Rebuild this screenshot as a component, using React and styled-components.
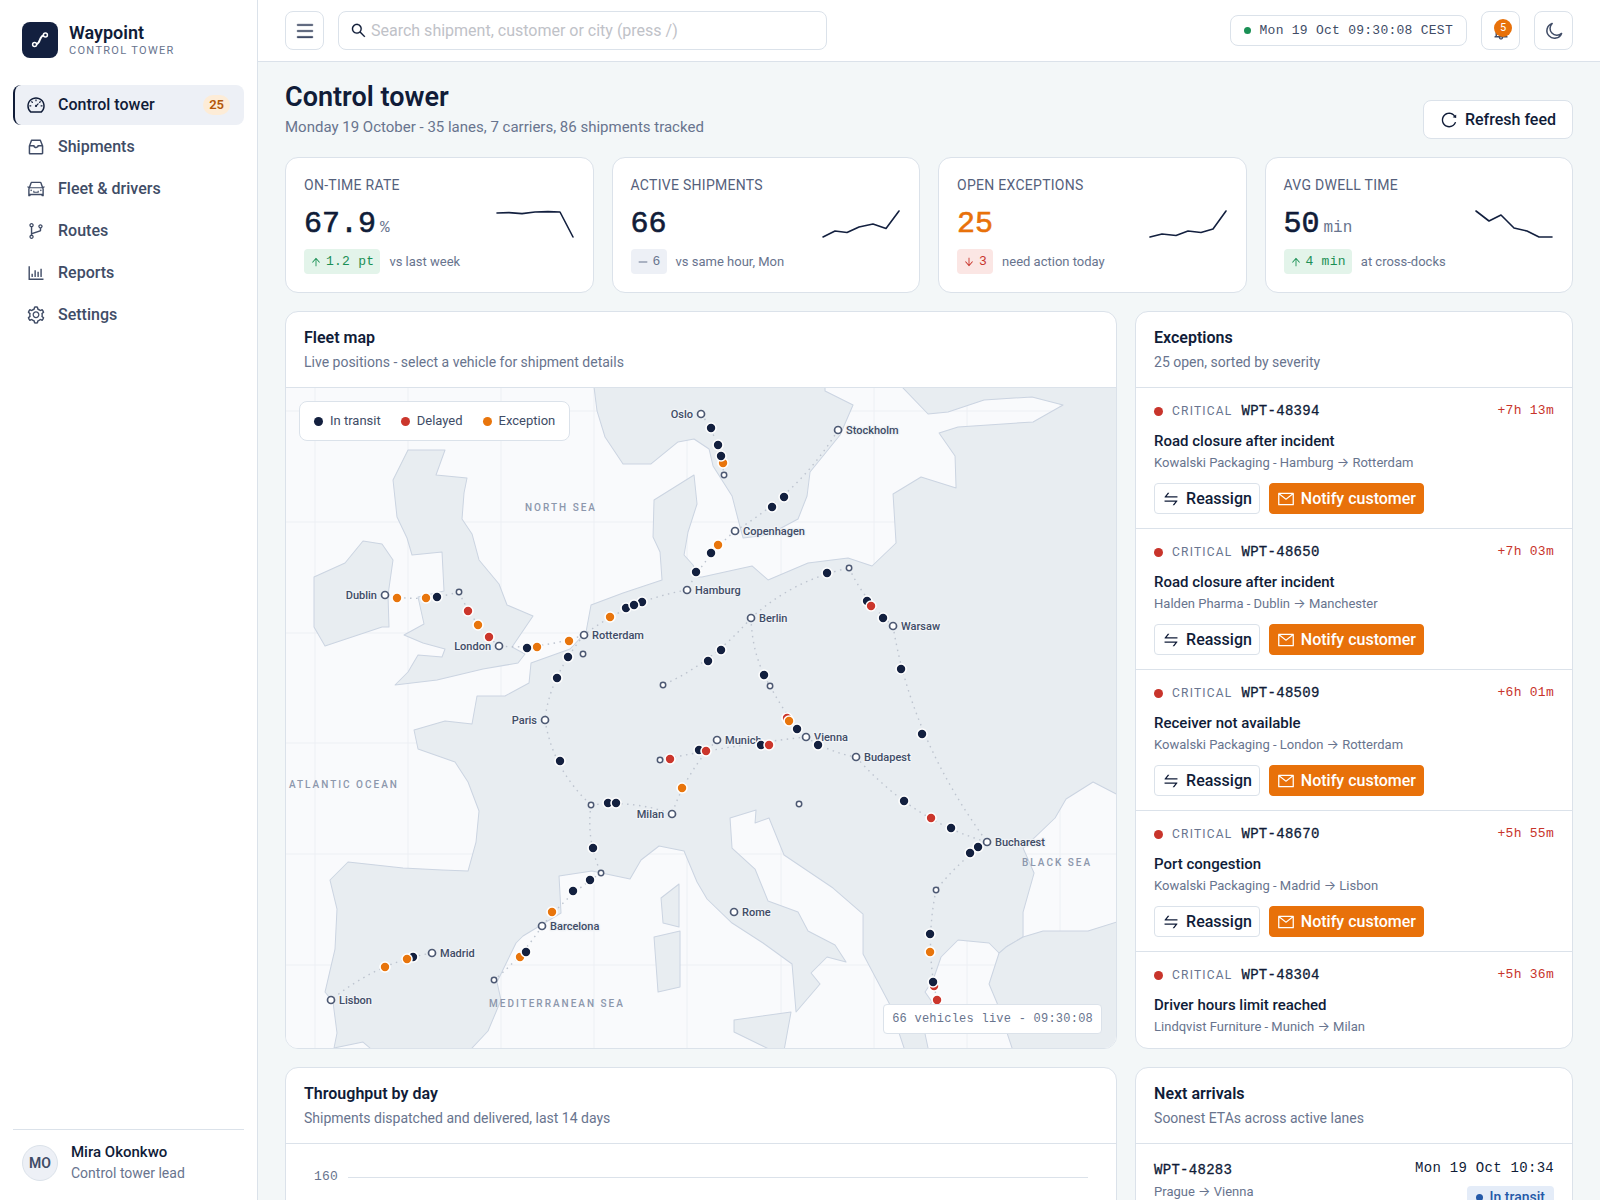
import React from "react";
import styled, { createGlobalStyle, css } from "styled-components";
import {
  AiOutlineDashboard,
  AiOutlineInbox,
  AiOutlineCar,
  AiOutlineBranches,
  AiOutlineBarChart,
  AiOutlineSetting,
  AiOutlineMenu,
  AiOutlineSearch,
  AiOutlineBell,
  AiOutlineReload,
  AiOutlineSwap,
  AiOutlineMail,
  AiOutlineArrowUp,
  AiOutlineArrowDown,
  AiOutlineMinus,
} from "react-icons/ai";

const c = {
  ink: "#101c38",
  text: "#404c66",
  muted: "#68748e",
  line: "#dbe2ea",
  page: "#f3f7f8",
  soft: "#edf0f6",
  orange: "#e8710a",
  red: "#c8342b",
  green: "#1a9055",
};
const sans = `Roboto, Inter, "Liberation Sans", sans-serif`;
const mono = `"Liberation Mono", monospace`;

const Global = createGlobalStyle`
  *, *::before, *::after { box-sizing: border-box; }
  html { overflow: hidden; }
  body { margin: 0; background: ${c.page}; color: ${c.ink}; font: 400 14px/20px ${sans}; }
  h1, h2, h3, p, ul { margin: 0; padding: 0; }
  ul { list-style: none; }
  button, input { font-family: inherit; }
  svg { display: block; flex: none; }
`;

const Shell = styled.div`
  display: grid;
  grid-template-columns: 258px minmax(0, 1fr);
  height: 100vh;
`;

/* Sidebar */
const Sidebar = styled.aside`
  display: flex;
  flex-direction: column;
  padding: 22px 13px 17px;
  background: #fff;
  border-right: 1px solid ${c.line};
`;
const Brand = styled.div`
  display: flex;
  align-items: center;
  gap: 11px;
  padding: 0 9px;
  margin-bottom: 27px;
`;
const Mark = styled.span`
  display: grid;
  place-items: center;
  width: 36px;
  height: 36px;
  border-radius: 8px;
  background: #13203f;
`;
const BrandName = styled.div`
  font-size: 18px;
  line-height: 22px;
  font-weight: 600;
`;
const BrandSub = styled.div`
  font-size: 11px;
  line-height: 14px;
  letter-spacing: 0.12em;
  text-transform: uppercase;
  color: ${c.muted};
`;
const Nav = styled.nav`
  display: flex;
  flex-direction: column;
  gap: 2px;
  flex: 1;
`;
const NavLink = styled.a`
  display: flex;
  align-items: center;
  gap: 12px;
  height: 40px;
  padding: 0 14px 0 11px;
  border-left: 2px solid transparent;
  border-radius: 8px;
  font-size: 16px;
  font-weight: 500;
  color: ${c.text};
  text-decoration: none;
  ${(p) =>
    p.$active &&
    css`
      color: ${c.ink};
      background: ${c.soft};
      border-left-color: ${c.ink};
    `}
`;
const NavCount = styled.span`
  margin-left: auto;
  padding: 0 6px;
  border-radius: 10px;
  background: #fdecd7;
  color: #b4560a;
  font-size: 13px;
  line-height: 20px;
  font-weight: 600;
`;
const Profile = styled.div`
  display: flex;
  align-items: center;
  gap: 13px;
  padding: 12px 9px 0;
  border-top: 1px solid ${c.line};
`;
const Avatar = styled.span`
  display: grid;
  place-items: center;
  width: 36px;
  height: 36px;
  border: 1px solid ${c.line};
  border-radius: 50%;
  background: ${c.soft};
  color: ${c.text};
  font-weight: 600;
`;
const ProfileName = styled.div`
  font-size: 15px;
  line-height: 21px;
  font-weight: 500;
`;
const ProfileRole = styled.div`
  line-height: 20px;
  color: ${c.muted};
`;

/* Top bar */
const Main = styled.main`
  display: flex;
  flex-direction: column;
  min-width: 0;
  overflow: hidden;
`;
const TopBar = styled.header`
  display: flex;
  flex: none;
  align-items: center;
  gap: 14px;
  padding: 11px 27px;
  background: #fff;
  border-bottom: 1px solid ${c.line};
`;
const IconButton = styled.button`
  display: grid;
  place-items: center;
  position: relative;
  width: 39px;
  height: 39px;
  padding: 0;
  border: 1px solid ${c.line};
  border-radius: 8px;
  background: #fff;
  color: ${c.text};
`;
const Search = styled.label`
  display: flex;
  align-items: center;
  gap: 4px;
  width: 489px;
  height: 39px;
  padding: 0 11px;
  border: 1px solid ${c.line};
  border-radius: 8px;
  color: ${c.ink};
`;
const SearchInput = styled.input`
  flex: 1;
  min-width: 0;
  padding: 0;
  border: 0;
  outline: 0;
  background: transparent;
  font-size: 16px;
  line-height: 24px;
  &::placeholder {
    color: #bfc2c8;
    opacity: 1;
  }
`;
const Clock = styled.div`
  display: flex;
  align-items: center;
  gap: 9px;
  height: 31px;
  margin-left: auto;
  padding: 0 13px;
  border: 1px solid ${c.line};
  border-radius: 8px;
  font: 400 13px/20px ${mono};
  letter-spacing: 0.02em;
  white-space: nowrap;
  color: ${c.text};
`;
const Dot = styled.i`
  flex: none;
  width: ${(p) => p.$size || 9}px;
  height: ${(p) => p.$size || 9}px;
  border-radius: 50%;
  background: ${(p) => p.$color};
`;
const BellCount = styled.span`
  position: absolute;
  top: 7px;
  right: 7px;
  min-width: 18px;
  border-radius: 9px;
  background: ${c.orange};
  color: #fff;
  font-size: 11px;
  line-height: 18px;
  text-align: center;
`;

/* Page */
const Page = styled.div`
  display: flex;
  flex-direction: column;
  gap: 18px;
  min-height: 0;
  padding: 19px 27px 0;
`;
const PageHead = styled.div`
  display: flex;
  align-items: flex-end;
  justify-content: space-between;
`;
const Title = styled.h1`
  font-size: 27px;
  line-height: 32px;
  font-weight: 600;
`;
const Subtitle = styled.p`
  margin-top: 3px;
  font-size: 15px;
  line-height: 23px;
  color: ${c.muted};
`;
const RefreshButton = styled.button`
  display: flex;
  align-items: center;
  gap: 7px;
  height: 39px;
  padding: 0 16px;
  border: 1px solid ${c.line};
  border-radius: 8px;
  background: #fff;
  color: ${c.ink};
  font-size: 16px;
  font-weight: 500;
`;
const Card = styled.section`
  min-width: 0;
  overflow: hidden;
  border: 1px solid ${c.line};
  border-radius: 13px;
  background: #fff;
`;
const KpiGrid = styled.div`
  display: grid;
  grid-template-columns: repeat(4, minmax(0, 1fr));
  gap: 18px;
`;
const Kpi = styled(Card)`
  display: flex;
  flex-direction: column;
  padding: 17px 18px 18px;
`;
const KpiLabel = styled.h2`
  font-size: 14px;
  line-height: 20px;
  font-weight: 400;
  letter-spacing: 0.02em;
  text-transform: uppercase;
  color: #55617c;
`;
const KpiBody = styled.div`
  display: flex;
  align-items: center;
  justify-content: space-between;
  height: 54px;
  padding-top: 4px;
`;
const KpiValue = styled.div`
  display: flex;
  align-items: baseline;
  gap: 4px;
  font: 500 30px/36px ${mono};
  -webkit-text-stroke: 0.6px currentColor;
  color: ${(p) => (p.$alert ? c.orange : c.ink)};
`;
const KpiUnit = styled.span`
  font-size: 16px;
  line-height: 16px;
  -webkit-text-stroke: 0;
  color: ${c.muted};
`;
const KpiFoot = styled.div`
  display: flex;
  align-items: center;
  gap: 9px;
  font-size: 13px;
  color: ${c.muted};
`;
const tones = {
  up: ["#e3f4ea", c.green],
  down: ["#fbe6e4", c.red],
  flat: [c.soft, c.muted],
};
const Delta = styled.span`
  display: flex;
  align-items: center;
  gap: 4px;
  height: 25px;
  padding: 0 6px;
  border-radius: 4px;
  background: ${(p) => tones[p.$tone][0]};
  color: ${(p) => tones[p.$tone][1]};
  font: 400 13px/20px ${mono};
  letter-spacing: 0.02em;
`;

const Columns = styled.div`
  display: grid;
  grid-template-columns: minmax(0, 1.9fr) minmax(0, 1fr);
  gap: 18px;
`;
const CardHead = styled.header`
  padding: 14px 18px 13px;
  border-bottom: 1px solid ${c.line};
`;
const CardTitle = styled.h2`
  font-size: 16px;
  line-height: 24px;
  font-weight: 600;
`;
const CardSub = styled.p`
  line-height: 24px;
  color: ${c.muted};
`;

/* Map */
const MapArea = styled.div`
  position: relative;
  height: 660px;
  background: #f9fafc;
`;
const MapSvg = styled.svg`
  width: 100%;
  height: 100%;
  font-family: ${sans};
`;
const Legend = styled.ul`
  position: absolute;
  top: 13px;
  left: 13px;
  display: flex;
  align-items: center;
  gap: 20px;
  height: 40px;
  padding: 0 14px;
  border: 1px solid ${c.line};
  border-radius: 8px;
  background: #fff;
  color: ${c.text};
  font-size: 13px;
`;
const LegendItem = styled.li`
  display: flex;
  align-items: center;
  gap: 7px;
`;
const LivePill = styled.div`
  position: absolute;
  right: 14px;
  bottom: 14px;
  height: 30px;
  padding: 0 8px;
  border: 1px solid ${c.line};
  border-radius: 4px;
  background: #fff;
  color: ${c.muted};
  font: 400 12px/28px ${mono};
  letter-spacing: 0.02em;
`;

/* Exceptions */
const ExceptionItem = styled.li`
  padding: 13px 18px 14px;
  border-bottom: 1px solid ${c.line};
  &:last-child {
    padding-bottom: 8px;
    border-bottom: 0;
  }
`;
const ExceptionTop = styled.div`
  display: flex;
  align-items: center;
  gap: 9px;
  height: 20px;
`;
const Severity = styled.span`
  font-size: 12px;
  letter-spacing: 0.1em;
  text-transform: uppercase;
  color: ${c.muted};
`;
const ShipId = styled.span`
  font: 500 14px/20px ${mono};
  letter-spacing: 0.02em;
  -webkit-text-stroke: 0.3px currentColor;
`;
const Late = styled.span`
  margin-left: auto;
  font: 400 13px/20px ${mono};
  letter-spacing: 0.02em;
  color: ${c.red};
`;
const Reason = styled.h3`
  margin-top: 10px;
  font-size: 15px;
  line-height: 20px;
  font-weight: 500;
`;
const Lane = styled.p`
  font-size: 13px;
  line-height: 24px;
  color: ${c.muted};
`;
const Actions = styled.div`
  display: flex;
  gap: 9px;
  margin-top: 8px;
`;
const ActionButton = styled.button`
  display: flex;
  align-items: center;
  gap: 6px;
  height: 31px;
  padding: 0 7px;
  border: 1px solid ${(p) => (p.$primary ? c.orange : c.line)};
  border-radius: 4px;
  background: ${(p) => (p.$primary ? c.orange : "#fff")};
  color: ${(p) => (p.$primary ? "#fff" : c.ink)};
  font-size: 16px;
  font-weight: 500;
  white-space: nowrap;
`;

/* Lower cards */
const ChartArea = styled.div`
  padding: 22px 28px 200px;
`;
const Tick = styled.div`
  display: flex;
  align-items: center;
  gap: 10px;
  font: 400 13px/22px ${mono};
  letter-spacing: 0.02em;
  color: ${c.muted};
  &::after {
    content: "";
    flex: 1;
    height: 1px;
    background: ${c.line};
  }
`;
const Arrival = styled.li`
  display: flex;
  justify-content: space-between;
  padding: 14px 18px;
`;
const ArrivalSide = styled.div`
  display: flex;
  flex-direction: column;
  align-items: ${(p) => (p.$end ? "flex-end" : "flex-start")};
  gap: ${(p) => (p.$end ? 8 : 0)}px;
  padding-top: ${(p) => (p.$end ? 0 : 2)}px;
`;
const Eta = styled.time`
  font: 400 14px/20px ${mono};
  letter-spacing: 0.02em;
`;
const Status = styled.span`
  display: flex;
  align-items: center;
  gap: 7px;
  padding: 0 9px;
  border-radius: 4px;
  background: #e4ecf8;
  color: #2459a8;
  line-height: 22px;
  font-weight: 500;
`;

const nav = [
  ["Control tower", AiOutlineDashboard, 25],
  ["Shipments", AiOutlineInbox],
  ["Fleet & drivers", AiOutlineCar],
  ["Routes", AiOutlineBranches],
  ["Reports", AiOutlineBarChart],
  ["Settings", AiOutlineSetting],
];

const kpis = [
  { label: "On-time rate", value: "67.9", unit: "%", tone: "up", delta: "1.2 pt", note: "vs last week", line: "2,4 14,3.6 27,4.6 40,3 53,2.6 65,3 78,28" },
  { label: "Active shipments", value: "66", tone: "flat", delta: "6", note: "vs same hour, Mon", line: "2,28 14,22 26,23.5 38,18 52,15 65,19.5 78,2" },
  { label: "Open exceptions", value: "25", alert: true, tone: "down", delta: "3", note: "need action today", line: "2,28 14,25 28,26.5 40,22 53,23.5 65,20 78,2" },
  { label: "Avg dwell time", value: "50", unit: "min", tone: "up", delta: "4 min", note: "at cross-docks", line: "2,2 15,12 27,6 40,19 53,22 65,28 78,28" },
];

const exceptions = [
  { id: "WPT-48394", late: "+7h 13m", reason: "Road closure after incident", lane: "Kowalski Packaging - Hamburg → Rotterdam", open: true },
  { id: "WPT-48650", late: "+7h 03m", reason: "Road closure after incident", lane: "Halden Pharma - Dublin → Manchester", open: true },
  { id: "WPT-48509", late: "+6h 01m", reason: "Receiver not available", lane: "Kowalski Packaging - London → Rotterdam", open: true },
  { id: "WPT-48670", late: "+5h 55m", reason: "Port congestion", lane: "Kowalski Packaging - Madrid → Lisbon", open: true },
  { id: "WPT-48304", late: "+5h 36m", reason: "Driver hours limit reached", lane: "Lindqvist Furniture - Munich → Milan", open: false },
];

const land = [
  "408,450 445,450 436,475 467,478 464,493 462,519 472,534 479,560 499,584 507,605 533,616 512,647 525,654 518,663 483,669 437,680 395,685 408,672 418,655 442,657 445,649 423,643 404,635 424,624 418,597 444,591 442,552 412,555 407,538 397,517 393,480",
  "363,541 382,544 393,560 388,595 389,627 382,627 325,646 314,627 314,577 345,563",
  "594,380 594,387 597,411 605,437 623,464 651,464 678,442 694,439 709,449 713,466 732,496 740,527 743,538 768,535 783,527 798,519 807,496 810,472 840,435 853,405 825,391 825,380",
  "896,380 902,387 928,414 948,412 984,400 1032,397 1063,405 1033,422 958,427 939,433 955,456 956,488 921,477 893,494 896,543 872,566 848,558 808,563 768,580 752,566 702,577 698,577 693,565 684,555 688,532 697,504 694,475 654,500 653,537 660,552 662,580 623,593 591,605 586,632 570,649 531,663 529,683 505,696 477,696 472,724 445,721 414,730 418,749 455,762 468,782 479,811 476,842 468,871 442,870 403,868 348,862 330,880 337,909 335,949 325,992 333,1002 337,1033 334,1048 363,1042 370,1048 370,1056 465,1056 472,1048 488,1031 501,1000 497,982 516,943 523,936 561,913 559,876 592,871 630,879 641,860 659,846 684,851 697,882 707,899 732,923 763,943 792,964 796,1012 820,984 811,973 827,957 846,962 835,945 808,931 798,912 768,901 755,869 732,848 730,818 756,810 755,823 769,818 784,855 833,888 863,914 863,954 889,1003 904,1048 906,1056 930,1056 928,1048 921,1015 932,1002 925,992 933,980 941,957 958,940 989,943 999,953 1006,947 1023,937 1023,912 1034,873 1023,848 1035,837 1055,818 1066,799 1093,782 1118,795 1130,795 1130,380",
  "1130,918 1117,922 1088,931 1043,931 1023,937 1006,947 999,953 989,984 997,1003 1012,1048 1014,1056 1130,1056",
  "734,1020 791,1012 783,1056 775,1052 734,1032",
  "679,884 679,927 663,923 661,898",
  "680,931 680,987 658,992 654,937",
];

const routes = [
  "M701,414Q719,437 724,475", "M838,430Q800,492 735,531", "M735,531Q706,555 687,590",
  "M687,590Q629,600 584,635", "M584,635Q541,650 499,646", "M499,646Q474,626 459,592",
  "M459,592Q420,603 385,595", "M584,635Q549,678 545,720", "M545,720Q553,770 591,805",
  "M591,805Q635,800 672,814", "M591,805Q586,840 601,873", "M601,873Q568,894 542,926",
  "M542,926Q522,957 494,980", "M432,953Q378,962 331,1000", "M751,618Q793,580 849,568",
  "M849,568Q865,602 893,626", "M893,626Q911,738 987,842", "M751,618Q712,663 663,685",
  "M751,618Q752,656 770,686", "M770,686Q787,718 806,737", "M806,737Q733,745 660,760",
  "M806,737Q828,752 856,757", "M856,757Q913,821 987,842", "M987,842Q958,862 936,890",
  "M936,890Q924,948 938,1004", "M717,740Q686,772 672,814",
];

const cities = [
  ["Oslo", 701, 414, 1], ["Stockholm", 838, 430], ["Copenhagen", 735, 531], ["Hamburg", 687, 590],
  ["Berlin", 751, 618], ["Warsaw", 893, 626], ["Dublin", 385, 595, 1], ["London", 499, 646, 1],
  ["Rotterdam", 584, 635], ["Paris", 545, 720, 1], ["Munich", 717, 740], ["Vienna", 806, 737],
  ["Budapest", 856, 757], ["Milan", 672, 814, 1], ["Bucharest", 987, 842], ["Rome", 734, 912],
  ["Barcelona", 542, 926], ["Madrid", 432, 953], ["Lisbon", 331, 1000],
];
const stops = [
  [459, 592], [583, 654], [724, 475], [849, 568], [770, 686], [663, 685],
  [660, 760], [591, 805], [601, 873], [494, 980], [799, 804], [936, 890],
];
const seas = [
  ["NORTH SEA", 525, 511], ["ATLANTIC OCEAN", 289, 788], ["MEDITERRANEAN SEA", 489, 1007], ["BLACK SEA", 1022, 866],
];
const fleetColor = { n: "#13203f", r: "#cb362c", o: "#e8750c" };
const vehicles = [
  ["n", 711, 428], ["n", 718, 445], ["o", 723, 463], ["n", 721, 456], ["n", 784, 497], ["n", 772, 507],
  ["o", 718, 545], ["n", 711, 553], ["n", 696, 572], ["n", 827, 573], ["n", 867, 601], ["r", 871, 606],
  ["n", 883, 618], ["n", 901, 669], ["n", 721, 650], ["n", 708, 661], ["n", 764, 675], ["r", 787, 718],
  ["o", 789, 721], ["n", 797, 729], ["n", 818, 745], ["n", 761, 745], ["r", 769, 745], ["n", 699, 750],
  ["r", 706, 751], ["r", 670, 759], ["o", 682, 788], ["n", 608, 803], ["n", 616, 803], ["n", 560, 761],
  ["n", 557, 678], ["n", 568, 657], ["n", 642, 602], ["n", 626, 608], ["n", 634, 605], ["o", 610, 617],
  ["o", 569, 641], ["o", 537, 647], ["n", 527, 648], ["r", 489, 637], ["o", 478, 625], ["r", 468, 611],
  ["n", 437, 597], ["o", 426, 598], ["o", 397, 598], ["n", 593, 848], ["n", 590, 880], ["n", 573, 891],
  ["o", 552, 912], ["o", 520, 957], ["n", 526, 952], ["n", 413, 957], ["o", 407, 959], ["o", 385, 967],
  ["n", 922, 734], ["n", 904, 801], ["r", 931, 818], ["n", 951, 828], ["n", 978, 847], ["n", 970, 853],
  ["n", 930, 934], ["o", 930, 952], ["r", 934, 986], ["n", 933, 982], ["r", 937, 1000],
];

function FleetMap() {
  return (
    <MapSvg viewBox="286 388 830 660" preserveAspectRatio="xMidYMid slice" role="img" aria-label="Fleet map">
      <g stroke="#edf0f4" strokeWidth="1">
        {[315, 408, 501, 594, 687, 781, 874, 967, 1060].map((x) => (
          <line key={x} x1={x} x2={x} y1="380" y2="1056" />
        ))}
        {[411, 522, 633, 743, 854, 965].map((y) => (
          <line key={y} x1="280" x2="1130" y1={y} y2={y} />
        ))}
      </g>
      <g fill="#e8edf1" stroke="#cbd4e1" strokeWidth="1" strokeLinejoin="round">
        {land.map((p) => <polygon key={p} points={p} />)}
      </g>
      <g fill="#8c97ac" fontSize="10" fontWeight="500" letterSpacing="2">
        {seas.map(([n, x, y]) => <text key={n} x={x} y={y}>{n}</text>)}
      </g>
      <g fill="none" stroke="#bdc4cf" strokeWidth="1.4" strokeDasharray="1.5 4.5">
        {routes.map((d) => <path key={d} d={d} />)}
      </g>
      <g fill="#fff" stroke="#4d5973">
        {stops.map(([x, y]) => <circle key={`${x}-${y}`} cx={x} cy={y} r="2.7" strokeWidth="1.5" />)}
        {cities.map(([n, x, y]) => <circle key={n} cx={x} cy={y} r="3.5" strokeWidth="1.7" />)}
      </g>
      <g fill="#404c66" fontSize="11" fontWeight="500" stroke="#f0f3f6" strokeWidth="2.5" strokeLinejoin="round" paintOrder="stroke">
        {cities.map(([n, x, y, left]) => (
          <text key={n} x={left ? x - 8 : x + 8} y={y + 4} textAnchor={left ? "end" : "start"}>{n}</text>
        ))}
      </g>
      <g stroke="#fff" strokeWidth="1.6">
        {vehicles.map(([t, x, y]) => <circle key={`${x}-${y}`} cx={x} cy={y} r="5" fill={fleetColor[t]} />)}
      </g>
    </MapSvg>
  );
}

const deltaIcon = { up: AiOutlineArrowUp, down: AiOutlineArrowDown, flat: AiOutlineMinus };

export default function App() {
  return (
    <>
      <Global />
      <Shell>
        <Sidebar>
          <Brand>
            <Mark>
              <svg width="18" height="18" viewBox="0 0 18 18" fill="none" stroke="#fff" strokeWidth="1.5" aria-hidden="true">
                <circle cx="3.6" cy="13.4" r="2" />
                <circle cx="14.4" cy="4" r="2" />
                <path d="M5.600 13.200C9.400 12.400 8.200 5.400 12.400 4.400" strokeWidth="2" />
              </svg>
            </Mark>
            <div>
              <BrandName>Waypoint</BrandName>
              <BrandSub>Control tower</BrandSub>
            </div>
          </Brand>
          <Nav aria-label="Main">
            {nav.map(([label, Icon, count]) => (
              <NavLink key={label} href="#" $active={!!count} aria-current={count ? "page" : undefined}>
                <Icon size={20} />
                {label}
                {count && <NavCount>{count}</NavCount>}
              </NavLink>
            ))}
          </Nav>
          <Profile>
            <Avatar>MO</Avatar>
            <div>
              <ProfileName>Mira Okonkwo</ProfileName>
              <ProfileRole>Control tower lead</ProfileRole>
            </div>
          </Profile>
        </Sidebar>
        <Main>
          <TopBar>
            <IconButton aria-label="Toggle menu"><AiOutlineMenu size={20} strokeWidth="20" /></IconButton>
            <Search>
              <AiOutlineSearch size={17} strokeWidth="10" />
              <SearchInput type="text" aria-label="Search" placeholder="Search shipment, customer or city (press /)" />
            </Search>
            <Clock><Dot $size={7} $color={c.green} />Mon 19 Oct 09:30:08 CEST</Clock>
            <IconButton aria-label="Notifications">
              <AiOutlineBell size={20} />
              <BellCount>5</BellCount>
            </IconButton>
            <IconButton aria-label="Dark mode">
              <svg width="18" height="18" viewBox="0 0 18 18" fill="none" stroke="currentColor" strokeWidth="1.5" strokeLinejoin="round" aria-hidden="true">
                <path d="M7.200 1.400A7.600 7.600 0 1 0 16.600 11.400A6.600 6.600 0 0 1 7.200 1.400Z" />
              </svg>
            </IconButton>
          </TopBar>
          <Page>
            <PageHead>
              <div>
                <Title>Control tower</Title>
                <Subtitle>Monday 19 October - 35 lanes, 7 carriers, 86 shipments tracked</Subtitle>
              </div>
              <RefreshButton><AiOutlineReload size={18} />Refresh feed</RefreshButton>
            </PageHead>
            <KpiGrid>
              {kpis.map((k) => {
                const Icon = deltaIcon[k.tone];
                return (
                  <Kpi key={k.label}>
                    <KpiLabel>{k.label}</KpiLabel>
                    <KpiBody>
                      <KpiValue $alert={k.alert}>
                        {k.value}
                        {k.unit && <KpiUnit>{k.unit}</KpiUnit>}
                      </KpiValue>
                      <svg width="80" height="30" viewBox="0 0 80 30" fill="none" stroke="#13203f" strokeWidth="1.6" aria-hidden="true">
                        <polyline points={k.line} strokeLinejoin="round" strokeLinecap="round" />
                      </svg>
                    </KpiBody>
                    <KpiFoot>
                      <Delta $tone={k.tone}><Icon size={12} />{k.delta}</Delta>
                      {k.note}
                    </KpiFoot>
                  </Kpi>
                );
              })}
            </KpiGrid>
            <Columns>
              <Card>
                <CardHead>
                  <CardTitle>Fleet map</CardTitle>
                  <CardSub>Live positions - select a vehicle for shipment details</CardSub>
                </CardHead>
                <MapArea>
                  <FleetMap />
                  <Legend>
                    <LegendItem><Dot $color={fleetColor.n} />In transit</LegendItem>
                    <LegendItem><Dot $color={fleetColor.r} />Delayed</LegendItem>
                    <LegendItem><Dot $color={fleetColor.o} />Exception</LegendItem>
                  </Legend>
                  <LivePill>66 vehicles live - 09:30:08</LivePill>
                </MapArea>
              </Card>
              <Card>
                <CardHead>
                  <CardTitle>Exceptions</CardTitle>
                  <CardSub>25 open, sorted by severity</CardSub>
                </CardHead>
                <ul>
                  {exceptions.map((e) => (
                    <ExceptionItem key={e.id}>
                      <ExceptionTop>
                        <Dot $color={c.red} />
                        <Severity>Critical</Severity>
                        <ShipId>{e.id}</ShipId>
                        <Late>{e.late}</Late>
                      </ExceptionTop>
                      <Reason>{e.reason}</Reason>
                      <Lane>{e.lane}</Lane>
                      {e.open && (
                        <Actions>
                          <ActionButton><AiOutlineSwap size={18} />Reassign</ActionButton>
                          <ActionButton $primary><AiOutlineMail size={18} />Notify customer</ActionButton>
                        </Actions>
                      )}
                    </ExceptionItem>
                  ))}
                </ul>
              </Card>
              <Card>
                <CardHead>
                  <CardTitle>Throughput by day</CardTitle>
                  <CardSub>Shipments dispatched and delivered, last 14 days</CardSub>
                </CardHead>
                <ChartArea><Tick>160</Tick></ChartArea>
              </Card>
              <Card>
                <CardHead>
                  <CardTitle>Next arrivals</CardTitle>
                  <CardSub>Soonest ETAs across active lanes</CardSub>
                </CardHead>
                <ul>
                  <Arrival>
                    <ArrivalSide>
                      <ShipId>WPT-48283</ShipId>
                      <Lane>Prague → Vienna</Lane>
                    </ArrivalSide>
                    <ArrivalSide $end>
                      <Eta>Mon 19 Oct 10:34</Eta>
                      <Status><Dot $size={7} $color="#2459a8" />In transit</Status>
                    </ArrivalSide>
                  </Arrival>
                </ul>
              </Card>
            </Columns>
          </Page>
        </Main>
      </Shell>
    </>
  );
}
